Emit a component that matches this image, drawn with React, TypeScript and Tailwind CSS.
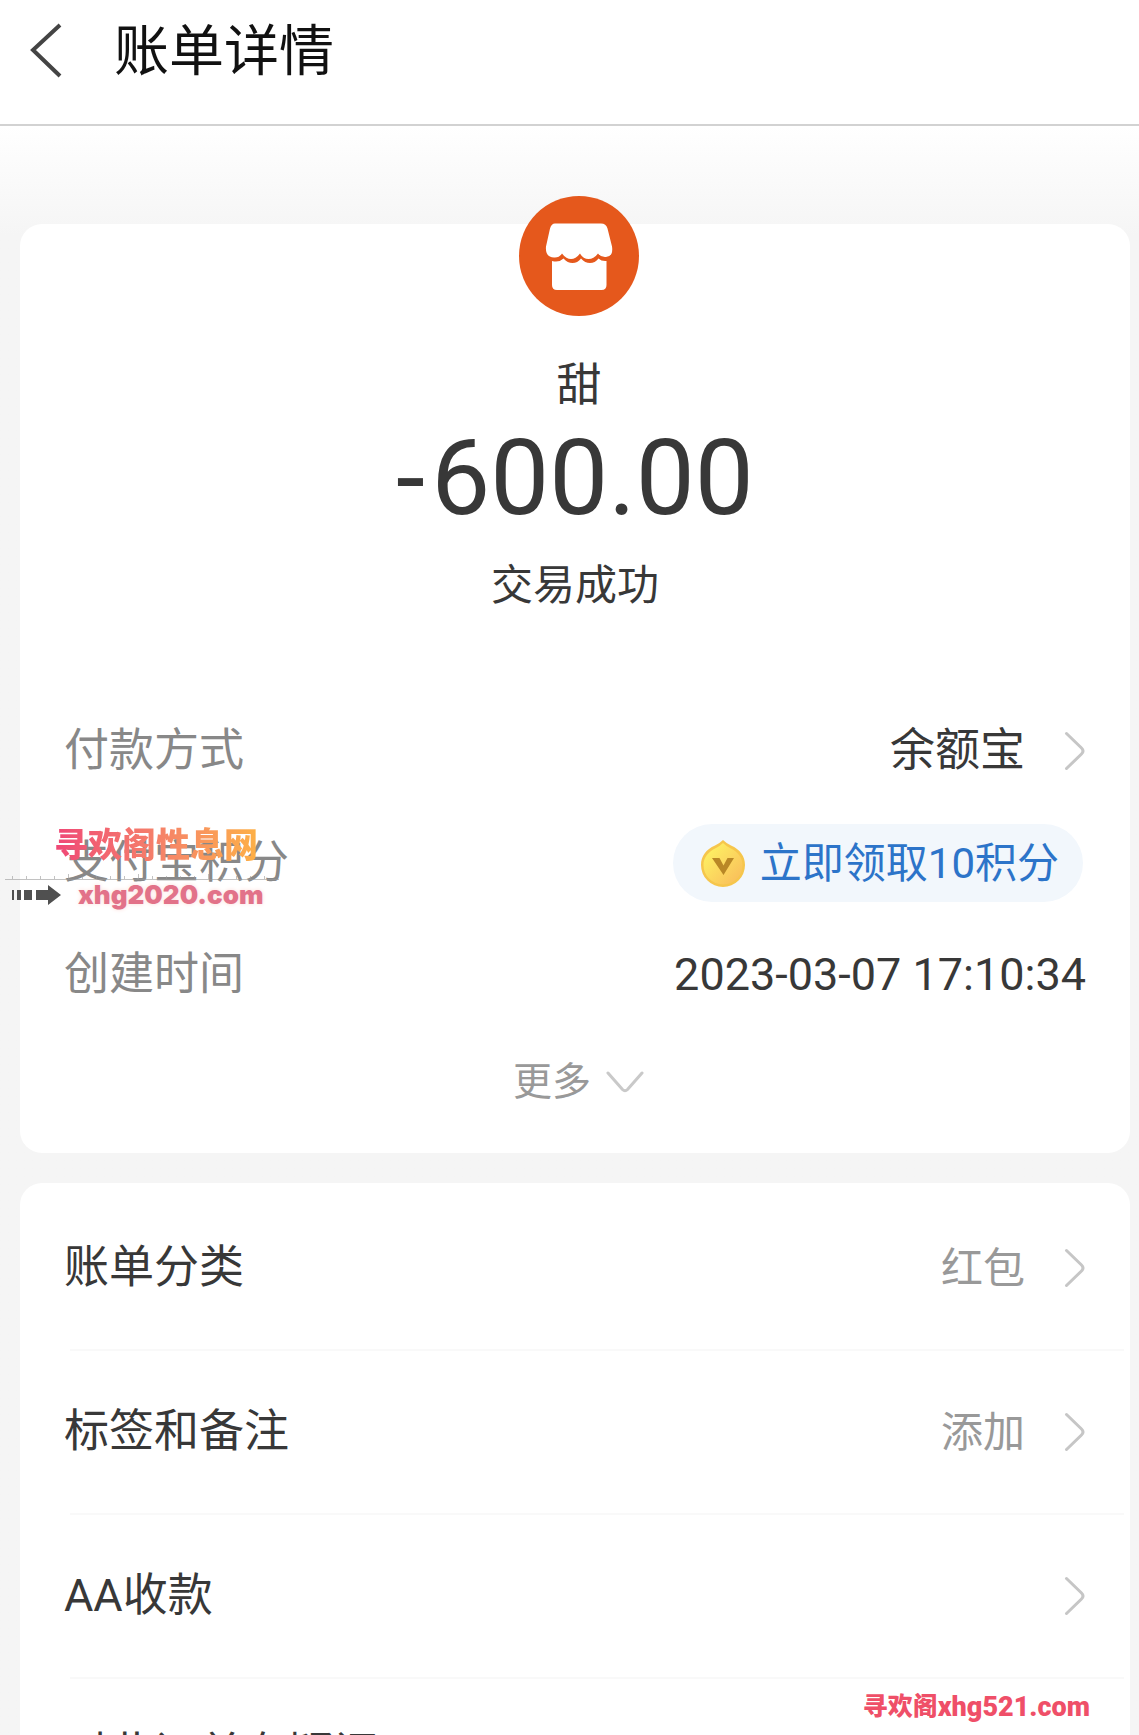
import React from 'react';

interface ChevronProps {
  className?: string;
}

function ChevronRight({ className = '' }: ChevronProps) {
  return (
    <svg viewBox="0 0 22 40" className={`h-10 w-[22px] shrink-0 ${className}`} fill="none" aria-hidden="true">
      <path d="M2.5 2.5 17.5 17q3 3 0 6L2.5 37.5" stroke="#c6c6c6" strokeWidth="3" strokeLinecap="round" />
    </svg>
  );
}

function ChevronDown() {
  return (
    <svg viewBox="0 0 40 24" className="h-6 w-10 shrink-0" fill="none" aria-hidden="true">
      <path d="M3 3 17.5 19.5q2.5 2.500 5 0L37 3" stroke="#c9c9c9" strokeWidth="3" strokeLinecap="round" />
    </svg>
  );
}

function StoreIcon() {
  return (
    <svg viewBox="0 0 120 120" className="h-[120px] w-[120px]" aria-hidden="true">
      <circle cx="60" cy="60" r="60" fill="#e5581c" />
      <path
        d="M36 27.500h46q5 0 6.500 5l4.500 18q1.500 10-6 10.500-5 .5-8-3.500-4 5.500-9.500 5.500t-8.500-5.500q-4 5.500-9 5.500t-9-5.500q-3 4.500-8 4-9-.5-8-11l4-18q1.500-5 5-5z"
        fill="#fff"
      />
      <path
        d="M33 65q7 2 11.500-2.500 4 4.500 9 4.500t8.500-4.500q4 4.500 9 4.500t8.500-4.500q3 3 8 2.500v24q0 5-5 5H38q-5 0-5-5z"
        fill="#fff"
      />
    </svg>
  );
}

function CoinIcon() {
  return (
    <svg viewBox="0 0 46 50" className="h-[50px] w-[46px] shrink-0" aria-hidden="true">
      <defs>
        <linearGradient id="coin" x1="0" y1="0" x2="1" y2="1">
          <stop offset="0.2" stopColor="#fdec62" />
          <stop offset="1" stopColor="#f9b95a" />
        </linearGradient>
      </defs>
      <path d="M23 2q3 3 8 5.500C40 11.500 45 18 45 27a22 22 0 0 1-44 0C1 18 6 11.500 15 7.500q5-2.500 8-5.500z" fill="#f6c64c" />
      <path d="M23 5q3 3 7 5c8 4 12.500 9.500 12.500 17a19.500 19.500 0 0 1-39 0c0-7.500 4.500-13 12.500-17q4-2 7-5z" fill="url(#coin)" />
      <path d="M12 20h7.500l4 7.500 4-7.500H34L23.500 37z" fill="#b98726" />
    </svg>
  );
}

const settings = [
  { label: '账单分类', value: '红包' },
  { label: '标签和备注', value: '添加' },
  { label: 'AA收款', value: '' },
  { label: '对此订单有疑问', value: '' },
];

const ticks = Array.from({ length: 19 }, (_, i) => i);

function SiteStamp() {
  return (
    <div className="pointer-events-none absolute left-1 top-[825px] w-[290px]">
      <p className="ml-[50px] w-fit bg-gradient-to-r from-[#ef4676] via-[#f58069] to-[#fdb045] bg-clip-text text-[34px] font-black leading-10 text-transparent">
        寻欢阁性息网
      </p>
      <svg viewBox="0 0 290 16" className="block h-4 w-full" fill="none" stroke="#999" aria-hidden="true">
        <path d="M1 14.500H275" strokeOpacity="0.6" />
        {ticks.map((i) => (
          <path key={i} d={`M${8.500 + i * 14} 14v${i % 5 === 4 ? -5 : -3}`} strokeOpacity="0.6" />
        ))}
      </svg>
      <div className="flex items-center">
        <svg viewBox="0 0 50 22" className="ml-2 h-[22px] w-[50px] shrink-0" fill="#505050" aria-hidden="true">
          <path d="M0 6h2v10H0zM5 6h4v10H5zM12 6h8v10h-8zM24 6h12V1l13 10-13 10v-5H24z" />
        </svg>
        <p className="ml-4 font-[Inter] text-[26px] font-black leading-7 text-[#e27289] [text-shadow:0_0_4px_#fbdcd8]">
          xhg2020.com
        </p>
      </div>
    </div>
  );
}

export default function App() {
  return (
    <div className="relative h-screen overflow-hidden bg-[#f5f5f5] font-[Roboto,'Noto_Sans_CJK_SC',sans-serif] text-[#383838]">
      <header className="flex h-[126px] items-start border-b-2 border-[#d2d2d2] bg-white pl-[26px] pt-4">
        <button type="button" aria-label="返回" className="flex h-[70px] w-10 items-center">
          <svg viewBox="0 0 40 60" className="h-[60px] w-10" fill="none" aria-hidden="true">
            <path d="M34 4 7 29l27 26" stroke="#444" strokeWidth="4" />
          </svg>
        </button>
        <h1 className="ml-12 text-[55px] leading-[70px] text-[#111]">账单详情</h1>
      </header>

      <main className="bg-gradient-to-b from-white to-[#f5f5f5] to-[110px] pl-5 pr-[9px] pt-[98px]">
        <section className="h-[929px] rounded-[22px] bg-white px-11">
          <div className="flex flex-col items-center text-center">
            <div className="-mt-7 ml-2">
              <StoreIcon />
            </div>
            <h2 className="ml-2 mt-10 text-[45px] leading-[60px]">甜</h2>
            <p className="text-[105px] leading-[126px]">
              <span className="mr-1.5">-</span>600.00
            </p>
            <p className="mt-[14px] text-[42px] leading-[60px]">交易成功</p>
          </div>

          <dl className="mt-[79px] text-[45px]">
            <div className="flex h-28 items-center justify-between">
              <dt className="text-[#888]">付款方式</dt>
              <dd>
                <button type="button" className="flex items-center">
                  余额宝
                  <ChevronRight className="ml-[39px]" />
                </button>
              </dd>
            </div>
            <div className="flex h-28 items-center justify-between">
              <dt className="text-[#888]">支付宝积分</dt>
              <dd>
                <button
                  type="button"
                  className="mr-[3px] flex h-[78px] items-center rounded-full bg-[#f2f7fc] pl-[27px] pr-6 text-[42px] text-[#2c74c9]"
                >
                  <CoinIcon />
                  <span className="ml-[14px]">立即领取10积分</span>
                </button>
              </dd>
            </div>
            <div className="flex h-28 items-center justify-between">
              <dt className="text-[#888]">创建时间</dt>
              <dd>2023-03-07 17:10:34</dd>
            </div>
          </dl>

          <button type="button" className="mx-auto mt-[21px] flex items-center gap-[14px] pl-2 text-[39px] leading-[60px] text-[#999]">
            更多
            <ChevronDown />
          </button>
        </section>

        <section className="mt-[30px] rounded-t-[22px] bg-white pt-1">
          {settings.map((item, i) => (
            <React.Fragment key={item.label}>
              {i > 0 && <hr className="ml-[50px] mr-1.5 border-t-2 border-[#f9f9f9]" />}
              <button type="button" className="flex h-[162px] w-full items-center px-11 text-[45px] last:h-[152px]">
                <span>{item.label}</span>
                <span className="ml-auto text-[42px] text-[#999]">{item.value}</span>
                <ChevronRight className="ml-[39px]" />
              </button>
            </React.Fragment>
          ))}
        </section>
      </main>

      <SiteStamp />
      <p className="pointer-events-none absolute bottom-3 right-[49px] flex items-center text-[25px] font-black leading-8 text-[#ef4f68]">
        寻欢阁<span className="text-[27px]">xhg521.com</span>
      </p>
    </div>
  );
}
